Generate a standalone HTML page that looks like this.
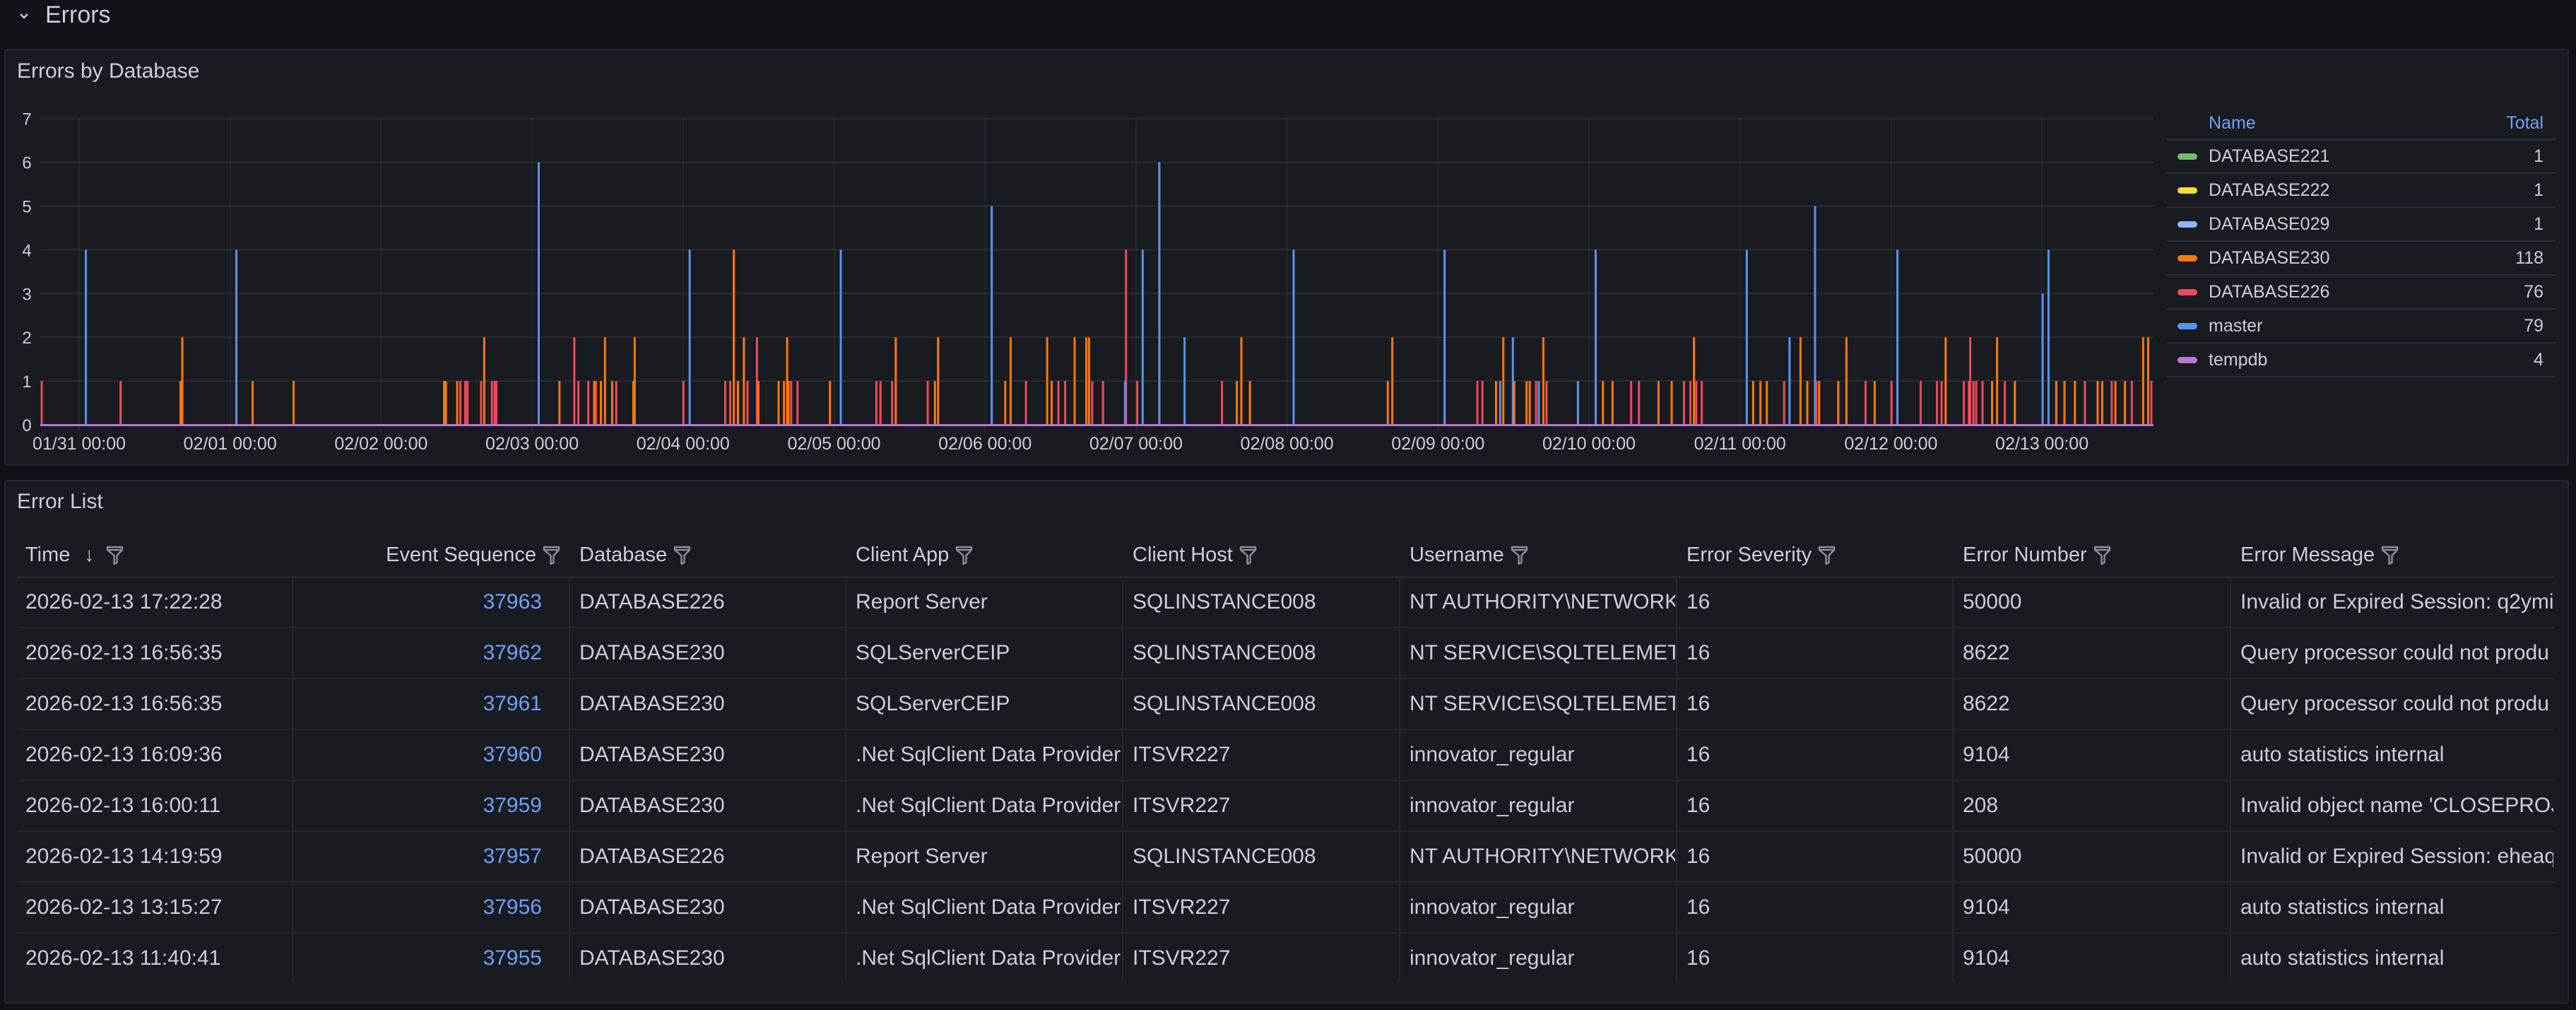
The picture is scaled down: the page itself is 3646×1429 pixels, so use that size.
<!DOCTYPE html>
<html><head><meta charset="utf-8">
<style>
*{margin:0;padding:0;box-sizing:border-box}
body{width:3646px;height:1429px;background:#111217;font-family:"Liberation Sans",sans-serif;color:#ccccdc;position:relative;overflow:hidden}
.abs{position:absolute}
.panel{position:absolute;background:#181b1f;border:2px solid #25282e;border-radius:4px}
.ptitle{position:absolute;font-size:30px;font-weight:500;color:#ccccdc}
.leg{position:absolute;left:3066px;width:551px}
.lrow{position:absolute;left:0;width:551px;height:48px;border-bottom:2px solid #2a2d33;font-size:25px}
.sw{position:absolute;left:16px;top:19px;width:28px;height:9px;border-radius:5px}
.lname{position:absolute;left:60px;top:9px}
.ltot{position:absolute;right:17px;top:9px}
.th{position:absolute;top:769px;font-size:29px;white-space:nowrap}
.cell{position:absolute;font-size:30px;white-space:nowrap;overflow:hidden}
.sep{position:absolute;top:816px;width:2px;height:572px;background:#24272c}
.hl{position:absolute;left:24px;width:3592px;height:3px;background:#24272c}
</style></head><body>
<svg class="abs" style="left:26px;top:16px" width="16" height="14" viewBox="0 0 16 14"><path d="M3 4l5 5 5-5" stroke="#ccccdc" stroke-width="2.4" fill="none"/></svg>
<div class="abs" style="left:64px;top:2px;font-size:34px;font-weight:500">Errors</div>

<div class="panel" style="left:6px;top:69px;width:3630px;height:590px"></div>
<div class="ptitle" style="left:24px;top:84px">Errors by Database</div>
<svg id="chart" class="abs" style="left:0;top:0" width="3060" height="660"></svg>

<div class="leg" style="top:150px">
<div class="abs" style="left:60px;top:10px;font-size:25px;color:#6e9fff;font-weight:500">Name</div>
<div class="abs" style="right:17px;top:10px;font-size:25px;color:#6e9fff;font-weight:500">Total</div>
<div class="abs" style="left:0;top:46px;width:551px;height:3px;background:#2a2d33"></div>
</div>
<div class="leg" style="top:198px">
<div class="lrow" style="top:0"><span class="sw" style="background:#73bf69"></span><span class="lname">DATABASE221</span><span class="ltot">1</span></div>
<div class="lrow" style="top:48px"><span class="sw" style="background:#fade2a"></span><span class="lname">DATABASE222</span><span class="ltot">1</span></div>
<div class="lrow" style="top:96px"><span class="sw" style="background:#8ab8ff"></span><span class="lname">DATABASE029</span><span class="ltot">1</span></div>
<div class="lrow" style="top:144px"><span class="sw" style="background:#ff780a"></span><span class="lname">DATABASE230</span><span class="ltot">118</span></div>
<div class="lrow" style="top:192px"><span class="sw" style="background:#f2495c"></span><span class="lname">DATABASE226</span><span class="ltot">76</span></div>
<div class="lrow" style="top:240px"><span class="sw" style="background:#5794f2"></span><span class="lname">master</span><span class="ltot">79</span></div>
<div class="lrow" style="top:288px"><span class="sw" style="background:#b877d9"></span><span class="lname">tempdb</span><span class="ltot">4</span></div>
</div>

<div class="panel" style="left:6px;top:679px;width:3630px;height:741px"></div>
<div class="ptitle" style="left:24px;top:693px">Error List</div>
<div id="tbl"></div>

<script>
(function(){
var NS="http://www.w3.org/2000/svg",svg=document.getElementById('chart');
function el(t,a,txt){var e=document.createElementNS(NS,t);for(var k in a)e.setAttribute(k,a[k]);if(txt!=null)e.textContent=txt;svg.appendChild(e);return e}
var base=601,u=61.9,L=57,R=3048;
for(var i=0;i<=7;i++){var y=base-i*u;if(i>0)el('rect',{x:L,y:y-1,width:R-L,height:2,fill:'rgba(204,204,220,0.10)'});el('text',{x:38,y:y+9,'font-size':24,fill:'#ccccdc','text-anchor':'middle','font-family':'Liberation Sans'},i)}
var days=['01/31','02/01','02/02','02/03','02/04','02/05','02/06','02/07','02/08','02/09','02/10','02/11','02/12','02/13'];
for(var d=0;d<14;d++){var x=112+d*213.7;el('rect',{x:x-1,y:base-7*u,width:2,height:7*u+12,fill:'rgba(204,204,220,0.07)'});el('text',{x:x,y:636,'font-size':25,fill:'#ccccdc','text-anchor':'middle','font-family':'Liberation Sans'},days[d]+' 00:00')}
var C={o:'#ff780a',r:'#f2495c',b:'#5794f2'};
var z6=[[15,'r',1],[113,'b',4],[190,'r',1],[323,'o',1],[327,'o',2],[447,'b',4],[483,'o',1],[574,'o',1],[908,'o',1],[912,'o',1],[937,'o',1],[944,'r',1],[955,'r',1],[960,'r',1],[990,'r',1],[997,'o',2],[1014,'r',1],[1020,'r',1],[1024,'r',1],[1118,'b',6],[1164,'o',1],[1197,'r',2],[1206,'r',1],[1228,'r',1],[1241,'o',1],[1245,'r',1],[1256,'o',1],[1265,'o',2],[1281,'o',1],[1290,'r',1],[1328,'o',1],[1331,'o',2],[1439,'r',1],[1453,'b',4],[1532,'r',1],[1543,'r',1],[1551,'o',4],[1560,'o',1]];
var z7=[[8,'o',1],[21,'o',2],[29,'r',1],[50,'r',2],[53,'o',1],[98,'o',1],[110,'o',1],[117,'o',2],[120,'o',1],[126,'r',1],[140,'r',1],[212,'o',1],[236,'b',4],[315,'r',1],[324,'r',1],[350,'r',1],[358,'o',2],[429,'r',1],[445,'o',1],[452,'o',2],[571,'b',5],[601,'o',1],[613,'o',2],[647,'r',1],[694,'o',2],[704,'o',1],[719,'r',1],[734,'r',1],[755,'o',2],[781,'o',2],[787,'o',2],[794,'r',1],[818,'r',1],[869,'r',4],[867,'b',1],[894,'r',1],[906,'b',4],[943,'b',6],[999,'b',2],[1082,'r',1],[1115,'o',1],[1125,'o',2],[1144,'o',1],[1241,'b',4],[1450,'o',1],[1460,'o',2]];
var z8=[[8,'b',4],[80,'r',1],[91,'r',1],[121,'o',1],[130,'b',1],[137,'o',2],[158,'b',2],[161,'o',1],[188,'o',1],[195,'o',1],[209,'r',1],[215,'b',1],[225,'o',2],[232,'r',1],[301,'b',1],[340,'b',4],[356,'o',1],[377,'o',1],[418,'r',1],[435,'r',1],[478,'o',1],[507,'o',1],[534,'r',1],[548,'r',1],[556,'o',2],[561,'r',1],[573,'r',1],[672,'b',4],[686,'o',1],[702,'o',1],[716,'o',1],[754,'r',1],[766,'b',2],[790,'o',2],[805,'o',1],[822,'b',5],[825,'r',1],[831,'o',1],[873,'o',1],[891,'o',2],[933,'r',1],[953,'o',1],[990,'r',1],[1003,'b',4],[1054,'r',1],[1090,'r',1],[1100,'r',1],[1109,'o',2],[1149,'r',1],[1160,'r',1],[1163,'r',2],[1170,'r',1],[1176,'r',1],[1190,'r',1],[1211,'o',1],[1222,'o',2],[1239,'r',1],[1261,'o',1],[1322,'b',3],[1335,'b',4],[1352,'o',1],[1370,'o',1],[1393,'o',1],[1415,'r',1],[1443,'o',1],[1453,'o',1],[1474,'r',1],[1482,'o',1],[1503,'o',1],[1518,'r',1],[1543,'o',2],[1554,'o',2],[1561,'r',1]];
function draw(arr,sc,off){arr.forEach(function(b){var x=b[0]/sc+off;el('rect',{x:x-2,y:base-b[2]*u,width:3,height:b[2]*u,fill:C[b[1]]})})}
draw(z6,1.568,50);draw(z7,1.568,1040);draw(z8,1.5525,2040);
el('rect',{x:L,y:base-1,width:R-L,height:3,fill:'#b877d9'});

var cols=[24,414,806,1197,1589,1981,2373,2764,3157,3616];
var heads=['Time','Event Sequence','Database','Client App','Client Host','Username','Error Severity','Error Number','Error Message'];
var rows=[
['2026-02-13 17:22:28','37963','DATABASE226','Report Server','SQLINSTANCE008','NT AUTHORITY\\NETWORK SERVICE','16','50000','Invalid or Expired Session: q2ymi'],
['2026-02-13 16:56:35','37962','DATABASE230','SQLServerCEIP','SQLINSTANCE008','NT SERVICE\\SQLTELEMETRY','16','8622','Query processor could not produ'],
['2026-02-13 16:56:35','37961','DATABASE230','SQLServerCEIP','SQLINSTANCE008','NT SERVICE\\SQLTELEMETRY','16','8622','Query processor could not produ'],
['2026-02-13 16:09:36','37960','DATABASE230','.Net SqlClient Data Provider','ITSVR227','innovator_regular','16','9104','auto statistics internal'],
['2026-02-13 16:00:11','37959','DATABASE230','.Net SqlClient Data Provider','ITSVR227','innovator_regular','16','208',"Invalid object name 'CLOSEPROJ"],
['2026-02-13 14:19:59','37957','DATABASE226','Report Server','SQLINSTANCE008','NT AUTHORITY\\NETWORK SERVICE','16','50000','Invalid or Expired Session: eheaq'],
['2026-02-13 13:15:27','37956','DATABASE230','.Net SqlClient Data Provider','ITSVR227','innovator_regular','16','9104','auto statistics internal'],
['2026-02-13 11:40:41','37955','DATABASE230','.Net SqlClient Data Provider','ITSVR227','innovator_regular','16','9104','auto statistics internal']];
var funnel='<svg width="27" height="28" viewBox="0 0 27 28" style="vertical-align:-5px;margin-left:8px"><path d="M3 3h21v4l-7.5 8v10l-4 2v-12L3 7z" fill="none" stroke="#8e8e9a" stroke-width="2.4" stroke-linejoin="round"/><path d="M4 7h19" stroke="#8e8e9a" stroke-width="2.4"/></svg>';
var h='';
for(var c=0;c<9;c++){
 var st=c==1?'right:'+(3646-cols[2]+12)+'px':'left:'+(cols[c]+(c==0?12:14))+'px';
 var extra=c==0?'<span style="margin-left:20px;margin-right:8px;font-size:28px">&#8595;</span>':'';
 h+='<div class="th" style="'+st+'">'+heads[c]+extra+funnel+'</div>';
}
h+='<div class="hl" style="top:815px"></div>';
for(var r=0;r<8;r++){
 var ty=816+r*72;
 if(r>0)h+='<div class="hl" style="top:'+(ty-1)+'px;height:2px"></div>';
 for(var c=0;c<9;c++){
  var w=cols[c+1]-cols[c]-(c==0?12:14)-2;
  if(c==1)h+='<div class="cell" style="top:'+(ty+19)+'px;right:'+(3646-767)+'px;color:#6e9fff">'+rows[r][c]+'</div>';
  else h+='<div class="cell" style="top:'+(ty+19)+'px;left:'+(cols[c]+(c==0?12:14))+'px;width:'+w+'px">'+rows[r][c]+'</div>';
 }
}
for(var c=1;c<9;c++)h+='<div class="sep" style="left:'+(cols[c]-1)+'px"></div>';
document.getElementById('tbl').innerHTML=h;
})();
</script>
</body></html>
